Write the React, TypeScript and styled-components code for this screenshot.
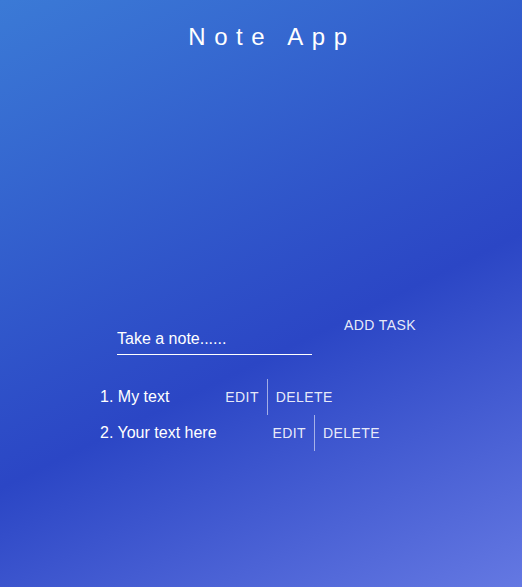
import React, { useState } from "react";
import styled, { createGlobalStyle } from "styled-components";

const GlobalStyle = createGlobalStyle`
  html, body { margin: 0; padding: 0; }
  body {
    min-height: 100vh;
    font-family: "Liberation Sans", Arial, sans-serif;
    background: linear-gradient(154deg, #3b7ad6 0%, #2b46c5 58%, #6478e2 100%);
    background-attachment: fixed;
    color: #fff;
  }
  #root { min-height: 100vh; }
`;

const Page = styled.div`
  min-height: 587px;
  display: flex;
  flex-direction: column;
`;

const Title = styled.h1`
  margin: 23px 0 0;
  padding-left: 22px;
  text-align: center;
  font-size: 24px;
  line-height: 28px;
  font-weight: 400;
  letter-spacing: 8.6px;
  color: #fff;
`;

const Form = styled.form`
  display: flex;
  align-items: flex-start;
  margin: 256px 0 0 117px;
`;

const NoteInput = styled.input`
  width: 195px;
  box-sizing: border-box;
  padding: 22px 0 5px;
  border: none;
  border-bottom: 1.5px solid #fff;
  background: transparent;
  font-family: "Liberation Sans", Arial, sans-serif;
  font-size: 16px;
  line-height: 20px;
  color: #fff;
  outline: none;
  &::placeholder { color: #fff; opacity: 1; }
`;

const TextButton = styled.button<{ $divider?: boolean }>`
  background: transparent;
  border: none;
  border-left: ${(p) => (p.$divider ? "1px solid rgba(255,255,255,0.55)" : "none")};
  padding: 0 8px;
  font-family: "Liberation Sans", Arial, sans-serif;
  font-size: 14px;
  letter-spacing: 0.4px;
  text-transform: uppercase;
  color: rgba(255, 255, 255, 0.9);
  cursor: pointer;
  height: 36px;
  align-self: stretch;
`;

const AddButton = styled(TextButton)`
  margin-left: 24px;
  height: 36px;
  line-height: 36px;
`;

const List = styled.ol`
  margin: 24px 0 0 100px;
  padding: 0;
  list-style: none;
`;

const Row = styled.li`
  display: flex;
  align-items: center;
  height: 36px;
`;

const ItemText = styled.span`
  font-size: 16px;
  color: #fff;
  margin-right: 48px;
`;

export default function App() {
  const [notes] = useState(["My text", "Your text here"]);
  return (
    <>
      <GlobalStyle />
      <Page>
        <Title>Note App</Title>
        <Form onSubmit={(e) => e.preventDefault()}>
          <NoteInput placeholder="Take a note......" />
          <AddButton type="submit">Add Task</AddButton>
        </Form>
        <List>
          {notes.map((n, i) => (
            <Row key={i}>
              <ItemText>
                {i + 1}. {n}
              </ItemText>
              <TextButton>Edit</TextButton>
              <TextButton $divider>Delete</TextButton>
            </Row>
          ))}
        </List>
      </Page>
    </>
  );
}
